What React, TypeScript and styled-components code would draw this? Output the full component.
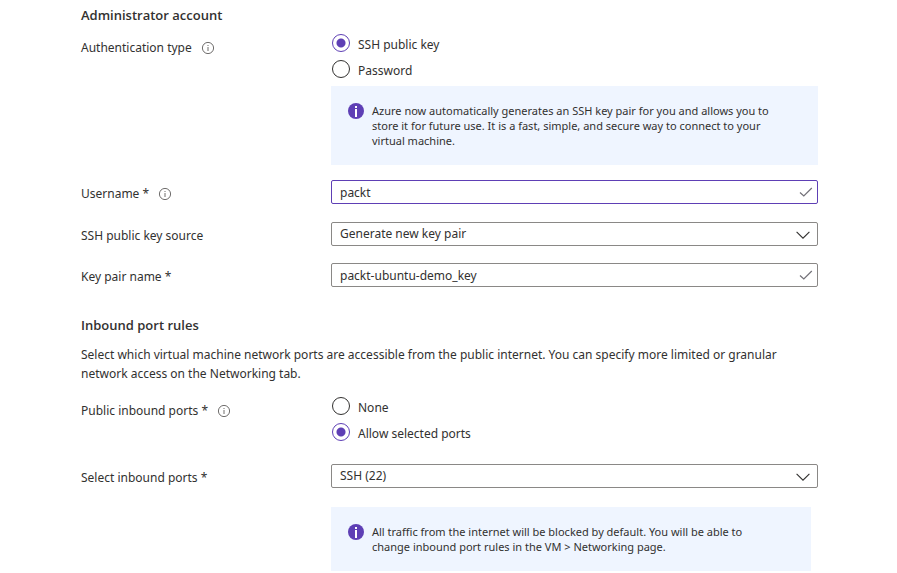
import React, { useState } from "react";
import styled, { createGlobalStyle } from "styled-components";

const ink = "#323130";
const violet = "#5e3fb5";

const GlobalStyle = createGlobalStyle`
  *, *::before, *::after { box-sizing: border-box; }
  body {
    margin: 0;
    background: #fff;
    color: ${ink};
    font: 12px/20px "Noto Sans", "Open Sans", sans-serif;
  }
  input, select, button { font: inherit; color: inherit; }
`;

const Form = styled.form`
  padding: 5px 79px 0 81px;
`;

const Section = styled.section`
  & + & { margin-top: 28px; }
`;

const Heading = styled.h2`
  margin: 0;
  font-family: "Open Sans", "Noto Sans", sans-serif;
  font-size: 13px;
  line-height: 20px;
  font-weight: 600;
`;

const Description = styled.p`
  margin: 10px 0 0;
  line-height: 19px;
`;

const Row = styled.div<{ $gap: number }>`
  display: grid;
  grid-template-columns: 250px minmax(0, 1fr);
  margin-top: ${({ $gap }) => $gap}px;
`;

const LabelCell = styled.div`
  display: flex;
  align-items: center;
  align-self: start;
  gap: 9px;
  padding-top: 4px;
`;

const InfoButton = styled.button`
  display: flex;
  padding: 0;
  border: 0;
  background: none;
  color: #605e5c;
`;

const RadioGroup = styled.div`
  display: flex;
  flex-direction: column;
  gap: 6px;
`;

const RadioLabel = styled.label`
  display: flex;
  align-items: center;
  gap: 8px;
  height: 20px;
  padding-top: 2px;
`;

const Radio = styled.input`
  appearance: none;
  flex: none;
  width: 18px;
  height: 18px;
  margin: 0 0 4px 1px;
  border: 1px solid ${ink};
  border-radius: 50%;
  &:checked {
    border-color: ${violet};
    background: radial-gradient(circle, ${violet} 4px, transparent 5px);
  }
`;

const Notice = styled.div<{ $gap: number; $inset?: boolean }>`
  display: flex;
  align-items: flex-start;
  gap: 8px;
  margin: ${({ $gap }) => $gap}px ${({ $inset }) => ($inset ? 7 : 0)}px 0 250px;
  padding: 17px 36px 17px 17px;
  background: #eff5ff;
  font-size: 11px;
  line-height: 15px;
  svg { flex: none; }
  p { margin: 0; }
`;

const Control = styled.div`
  display: grid;
  align-items: center;
  > * { grid-area: 1 / 1; }
  > svg { justify-self: end; pointer-events: none; }
`;

const fieldStyle = `
  width: 100%;
  height: 24px;
  margin: 0;
  padding: 0 30px 0 8px;
  border-radius: 2px;
  background: #fff;
  outline: none;
`;

const TextInput = styled.input<{ $active?: boolean }>`
  ${fieldStyle}
  border: 1px solid ${({ $active }) => ($active ? violet : "#8a8886")};
`;

const Select = styled.select`
  ${fieldStyle}
  appearance: none;
  border: 1px solid #8a8886;
`;

const CheckIcon = styled.svg`
  margin-right: 5px;
`;

const ChevronIcon = styled.svg`
  margin: 2px 8px 0 0;
`;

function Check() {
  return (
    <CheckIcon width="14" height="12" viewBox="0 0 14 12" fill="none" stroke="#737178" aria-hidden="true">
      <path d="M1 6.5 4.8 10 12.8 2" strokeWidth="1.2" />
    </CheckIcon>
  );
}

function Chevron() {
  return (
    <ChevronIcon width="14" height="10" viewBox="0 0 14 10" fill="none" stroke={ink} aria-hidden="true">
      <path d="M.6 1.8 7 8.2l6.4-6.4" strokeWidth="1.1" />
    </ChevronIcon>
  );
}

function Info({ label }: { label: string }) {
  return (
    <InfoButton type="button" aria-label={label}>
      <svg width="14" height="14" viewBox="0 0 14 14" fill="none" stroke="currentColor" aria-hidden="true">
        <circle cx="7" cy="7" r="5.6" strokeWidth=".9" />
        <path d="M7 6v4M7 4v1" strokeWidth=".9" />
      </svg>
    </InfoButton>
  );
}

function NoticeIcon() {
  return (
    <svg width="16" height="16" viewBox="0 0 16 16" aria-hidden="true">
      <circle cx="8" cy="8" r="8" fill={violet} />
      <path d="M7 3h2v2H7zM7 6h2v8H7z" fill="#fff" />
    </svg>
  );
}

interface ChoiceProps {
  name: string;
  label: string;
  options: string[];
  value: string;
  onChange: (value: string) => void;
}

function Choice({ name, label, options, value, onChange }: ChoiceProps) {
  return (
    <RadioGroup role="radiogroup" aria-labelledby={label}>
      {options.map((option) => (
        <RadioLabel key={option}>
          <Radio
            type="radio"
            name={name}
            checked={value === option}
            onChange={() => onChange(option)}
          />
          {option}
        </RadioLabel>
      ))}
    </RadioGroup>
  );
}

export default function App() {
  const [auth, setAuth] = useState("SSH public key");
  const [ports, setPorts] = useState("Allow selected ports");

  return (
    <>
      <GlobalStyle />
      <Form>
        <Section>
          <Heading>Administrator account</Heading>
          <Row $gap={9}>
            <LabelCell>
              <span id="auth-label">Authentication type</span>
              <Info label="About authentication type" />
            </LabelCell>
            <Choice
              name="auth"
              label="auth-label"
              options={["SSH public key", "Password"]}
              value={auth}
              onChange={setAuth}
            />
          </Row>
          <Notice $gap={6}>
            <NoticeIcon />
            <p>
              Azure now automatically generates an SSH key pair for you and allows you to store it
              for future use. It is a fast, simple, and secure way to connect to your virtual
              machine.
            </p>
          </Notice>
          <Row $gap={15}>
            <LabelCell>
              <label htmlFor="username">Username *</label>
              <Info label="About username" />
            </LabelCell>
            <Control>
              <TextInput id="username" defaultValue="packt" $active />
              <Check />
            </Control>
          </Row>
          <Row $gap={18}>
            <LabelCell>
              <label htmlFor="key-source">SSH public key source</label>
            </LabelCell>
            <Control>
              <Select id="key-source">
                <option>Generate new key pair</option>
              </Select>
              <Chevron />
            </Control>
          </Row>
          <Row $gap={17}>
            <LabelCell>
              <label htmlFor="key-name">Key pair name *</label>
            </LabelCell>
            <Control>
              <TextInput id="key-name" defaultValue="packt-ubuntu-demo_key" />
              <Check />
            </Control>
          </Row>
        </Section>
        <Section>
          <Heading>Inbound port rules</Heading>
          <Description>
            Select which virtual machine network ports are accessible from the public internet. You
            can specify more limited or granular network access on the Networking tab.
          </Description>
          <Row $gap={14}>
            <LabelCell>
              <span id="ports-label">Public inbound ports *</span>
              <Info label="About public inbound ports" />
            </LabelCell>
            <Choice
              name="ports"
              label="ports-label"
              options={["None", "Allow selected ports"]}
              value={ports}
              onChange={setPorts}
            />
          </Row>
          <Row $gap={21}>
            <LabelCell>
              <label htmlFor="inbound">Select inbound ports *</label>
            </LabelCell>
            <Control>
              <Select id="inbound">
                <option>SSH (22)</option>
              </Select>
              <Chevron />
            </Control>
          </Row>
          <Notice $gap={19} $inset>
            <NoticeIcon />
            <p>
              All traffic from the internet will be blocked by default. You will be able to change
              inbound port rules in the VM &gt; Networking page.
            </p>
          </Notice>
        </Section>
      </Form>
    </>
  );
}
